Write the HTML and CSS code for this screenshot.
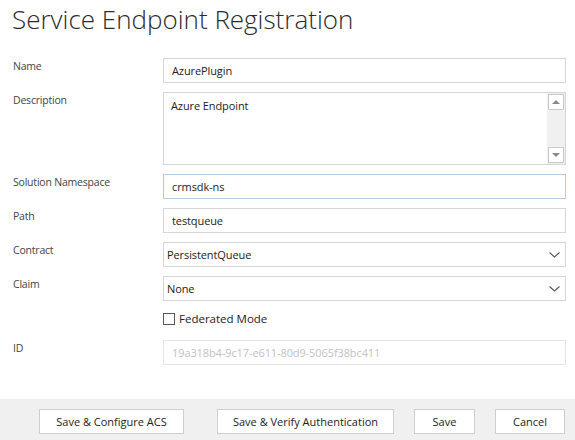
FILE: index.html
```html
<!DOCTYPE html>
<html lang="en">

<head>
    <meta charset="UTF-8">
    <title>Service Endpoint Registration</title>
    <link rel="stylesheet" href="styles.css">
</head>

<body>

    <div class="page">
        <h1 class="title">Service Endpoint Registration</h1>

        <form class="form" id="endpointForm">
            <label class="field-label" for="name">Name</label>
            <input class="field" type="text" id="name" value="AzurePlugin">

            <label class="field-label" for="description">Description</label>
            <div class="memo">
                <textarea id="description">Azure Endpoint</textarea>
                <div class="scrollbar">
                    <span class="scroll-btn">
                        <svg width="8" height="4" viewBox="0 0 8 4"><path d="M0 4 L4 0 L8 4 Z" fill="#8a8a8a"/></svg>
                    </span>
                    <span class="scroll-btn">
                        <svg width="8" height="4" viewBox="0 0 8 4"><path d="M0 0 L4 4 L8 0 Z" fill="#8a8a8a"/></svg>
                    </span>
                </div>
            </div>

            <label class="field-label" for="namespace">Solution Namespace</label>
            <input class="field focused" type="text" id="namespace" value="crmsdk-ns">

            <label class="field-label" for="path">Path</label>
            <input class="field" type="text" id="path" value="testqueue">

            <label class="field-label" for="contract">Contract</label>
            <div class="dropdown">
                <select id="contract">
                    <option>PersistentQueue</option>
                </select>
                <svg class="chevron" width="11" height="6" viewBox="0 0 11 6"><path d="M0.5 0.5 L5.5 5 L10.5 0.5" fill="none" stroke="#555" stroke-width="1.1"/></svg>
            </div>

            <label class="field-label" for="claim">Claim</label>
            <div class="dropdown">
                <select id="claim">
                    <option>None</option>
                </select>
                <svg class="chevron" width="11" height="6" viewBox="0 0 11 6"><path d="M0.5 0.5 L5.5 5 L10.5 0.5" fill="none" stroke="#555" stroke-width="1.1"/></svg>
            </div>

            <span></span>
            <label class="check-row">
                <span class="check-box"></span>
                Federated Mode
            </label>

            <label class="field-label" for="id">ID</label>
            <input class="field" type="text" id="id" value="19a318b4-9c17-e611-80d9-5065f38bc411" disabled>
        </form>

        <div class="footer">
            <button class="btn btn-acs" type="button">Save &amp; Configure ACS</button>
            <button class="btn btn-verify" type="button">Save &amp; Verify Authentication</button>
            <button class="btn btn-save" type="button">Save</button>
            <button class="btn btn-cancel" type="button">Cancel</button>
        </div>
    </div>

</body>

</html>
```

FILE: styles.css
```css
* {
    box-sizing: border-box;
}

body {
    margin: 0;
    padding: 0;
    background: #fff;
    font-family: 'Segoe UI', 'Open Sans', sans-serif;
    font-size: 11px;
    color: #444;
}

.page {
    display: flex;
    flex-direction: column;
    height: 100vh;
}

.title {
    margin: 0;
    padding: 1px 0 0 12px;
    height: 58px;
    font-size: 26px;
    font-weight: 300;
    color: #2b2b2b;
}

.form {
    display: grid;
    grid-template-columns: 150px 403px;
    row-gap: 9px;
    padding-left: 13px;
}

.field-label {
    padding-top: 1px;
    font-size: 10.5px;
    letter-spacing: -0.2px;
    color: #444;
}

.field {
    height: 25px;
    width: 100%;
    padding: 0 8px;
    border: 1px solid #d6d6d6;
    font-family: inherit;
    font-size: 11px;
    letter-spacing: -0.1px;
    color: #222;
    outline: none;
    background: #fff;
}

.field.focused {
    border-color: #b3cde4;
}

.field:disabled {
    color: #c2c2c2;
    border-color: #e6e6e6;
    background: #fff;
}

.memo {
    display: flex;
    height: 73px;
    border: 1px solid #d6d6d6;
}

.memo textarea {
    flex: 1;
    border: none;
    resize: none;
    outline: none;
    padding: 5px 7px;
    font-family: inherit;
    font-size: 11px;
    letter-spacing: -0.1px;
    color: #222;
}

.scrollbar {
    display: flex;
    flex-direction: column;
    justify-content: space-between;
    width: 18px;
    padding: 1px;
    background: #f0f0f0;
}

.scroll-btn {
    display: flex;
    align-items: center;
    justify-content: center;
    height: 16px;
    background: #fff;
    border: 1px solid #c9c9c9;
}

.dropdown {
    position: relative;
}

.dropdown select {
    appearance: none;
    width: 100%;
    height: 25px;
    padding: 0 3px;
    border: 1px solid #d6d6d6;
    border-radius: 0;
    background: #fff;
    font-family: inherit;
    font-size: 11px;
    letter-spacing: -0.1px;
    color: #222;
    outline: none;
}

.chevron {
    position: absolute;
    right: 6px;
    top: 10px;
}

.check-row {
    display: flex;
    align-items: center;
    gap: 4px;
    height: 21px;
    padding-bottom: 4px;
    font-size: 11.5px;
    color: #222;
}

.check-box {
    width: 12px;
    height: 12px;
    border: 1px solid #555;
    background: #fff;
}

.footer {
    margin-top: auto;
    display: flex;
    justify-content: flex-end;
    gap: 20px;
    height: 41px;
    padding: 10px 10px 0 0;
    background: #f0f0f0;
}

.btn {
    height: 25px;
    border: 1px solid #cfcfcf;
    background: #fff;
    font-family: inherit;
    font-size: 11px;
    color: #222;
}

.btn-acs {
    width: 145px;
    margin-right: 13px;
}

.btn-verify {
    width: 177px;
}

.btn-save {
    width: 61px;
}

.btn-cancel {
    width: 70px;
}
```
